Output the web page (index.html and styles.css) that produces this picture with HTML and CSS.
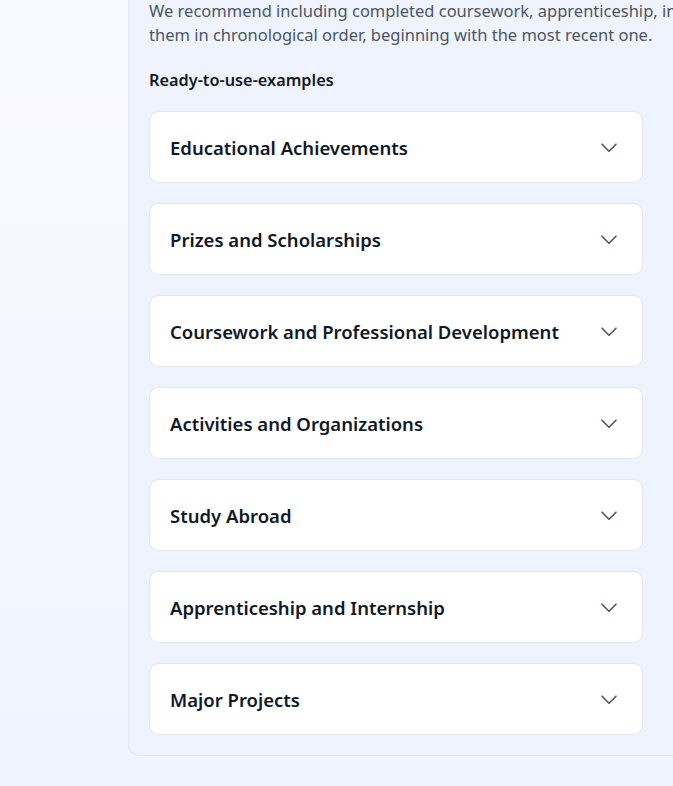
FILE: index.html
```html
<!DOCTYPE html>
<html lang="en">
<head>
<meta charset="utf-8">
<title>Education</title>
<link rel="stylesheet" href="styles.css">
</head>
<body>
<div class="layout">
  <aside class="sidebar"></aside>
  <main class="panel">
    <p class="intro">We recommend including completed coursework, apprenticeship, internships and study abroad experiences. List<br>them in chronological order, beginning with the most recent one.</p>
    <h3 class="examples-title">Ready-to-use-examples</h3>
    <div class="accordion">
      <button class="acc-item"><span>Educational Achievements</span><svg class="chev" viewBox="0 0 24 24" fill="none" stroke="currentColor" stroke-width="1.6" stroke-linecap="round" stroke-linejoin="round"><path d="M19 9.2l-7 7-7-7"/></svg></button>
      <button class="acc-item"><span>Prizes and Scholarships</span><svg class="chev" viewBox="0 0 24 24" fill="none" stroke="currentColor" stroke-width="1.6" stroke-linecap="round" stroke-linejoin="round"><path d="M19 9.2l-7 7-7-7"/></svg></button>
      <button class="acc-item"><span>Coursework and Professional Development</span><svg class="chev" viewBox="0 0 24 24" fill="none" stroke="currentColor" stroke-width="1.6" stroke-linecap="round" stroke-linejoin="round"><path d="M19 9.2l-7 7-7-7"/></svg></button>
      <button class="acc-item"><span>Activities and Organizations</span><svg class="chev" viewBox="0 0 24 24" fill="none" stroke="currentColor" stroke-width="1.6" stroke-linecap="round" stroke-linejoin="round"><path d="M19 9.2l-7 7-7-7"/></svg></button>
      <button class="acc-item"><span>Study Abroad</span><svg class="chev" viewBox="0 0 24 24" fill="none" stroke="currentColor" stroke-width="1.6" stroke-linecap="round" stroke-linejoin="round"><path d="M19 9.2l-7 7-7-7"/></svg></button>
      <button class="acc-item"><span>Apprenticeship and Internship</span><svg class="chev" viewBox="0 0 24 24" fill="none" stroke="currentColor" stroke-width="1.6" stroke-linecap="round" stroke-linejoin="round"><path d="M19 9.2l-7 7-7-7"/></svg></button>
      <button class="acc-item"><span>Major Projects</span><svg class="chev" viewBox="0 0 24 24" fill="none" stroke="currentColor" stroke-width="1.6" stroke-linecap="round" stroke-linejoin="round"><path d="M19 9.2l-7 7-7-7"/></svg></button>
    </div>
  </main>
</div>
</body>
</html>
```
FILE: styles.css
```css
html, body {
  margin: 0;
  padding: 0;
  overflow: hidden;
}
body {
  width: 673px;
  height: 786px;
  background: linear-gradient(180deg, #f8faff 0%, #eff4ff 100%);
  font-family: "Noto Sans", "Open Sans", sans-serif;
}
.layout {
  display: flex;
  align-items: flex-start;
  width: 1100px;
}
.sidebar {
  width: 128px;
  flex: none;
}
.panel {
  flex: none;
  width: 900px;
  box-sizing: border-box;
  margin-top: -1px;
  background: #eff3fd;
  border-left: 1px solid #e3e7ef;
  border-bottom: 1px solid #e3e7ef;
  border-bottom-left-radius: 12px;
  padding: 0 20px 20px 20px;
}
.intro {
  margin: 0;
  font-size: 16.5px;
  line-height: 24px;
  color: #4b5563;
  white-space: nowrap;
}
.examples-title {
  margin: 20px 0 0;
  font-size: 16.3px;
  line-height: 24px;
  font-weight: 600;
  color: #111827;
  position: relative;
  top: 1px;
}
.accordion {
  margin-top: 20px;
  width: 494px;
  display: flex;
  flex-direction: column;
  gap: 20px;
}
.acc-item {
  display: flex;
  align-items: center;
  justify-content: space-between;
  height: 72px;
  box-sizing: border-box;
  padding: 0 20px;
  background: #ffffff;
  border: 1px solid #e5e7eb;
  border-radius: 10px;
  font-family: inherit;
  font-size: 18.5px;
  font-weight: 600;
  color: #111827;
  text-align: left;
  cursor: pointer;
}
.chev {
  width: 24px;
  height: 24px;
  color: #4b5563;
  flex: none;
  margin-right: 1px;
}
```
